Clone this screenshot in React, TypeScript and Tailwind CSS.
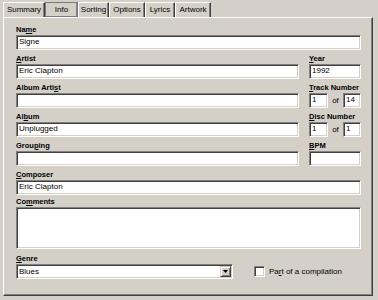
import React from "react";

const sunken =
  "border border-t-[#808080] border-l-[#808080] border-b-white border-r-white shadow-[inset_1px_1px_0_#404040,inset_-1px_-1px_0_#d4d0c8] bg-white";

const Label: React.FC<{ text: string; k: number; className?: string }> = ({
  text,
  k,
  className = "",
}) => (
  <div className={`h-[10px] leading-[10px] text-[7.5px] font-bold text-black ${className}`}>
    {text.slice(0, k)}
    <span className="underline underline-offset-1">{text[k]}</span>
    {text.slice(k + 1)}
  </div>
);

const Field: React.FC<{ value?: string; className?: string }> = ({
  value = "",
  className = "",
}) => (
  <div
    className={`${sunken} h-[15px] px-[2px] leading-[11px] text-[8px] text-black whitespace-nowrap overflow-hidden ${className}`}
  >
    {value}
  </div>
);

const tabs = [
  { name: "Summary", w: "w-[42px]" },
  { name: "Info", w: "w-[33px]" },
  { name: "Sorting", w: "w-[31px]" },
  { name: "Options", w: "w-[36px]" },
  { name: "Lyrics", w: "w-[30px]" },
  { name: "Artwork", w: "w-[36px]" },
];

const NumberPair: React.FC<{ a: string; b: string }> = ({ a, b }) => (
  <div className="flex items-center">
    <Field value={a} className="w-[19px]" />
    <span className="w-[15px] text-center text-[8px] leading-[15px]">of</span>
    <Field value={b} className="w-[18px]" />
  </div>
);

export default function App() {
  return (
    <div
      className="w-[378px] h-[300px] bg-[#d4d0c8] text-black overflow-hidden"
      style={{ fontFamily: '"Liberation Sans", Arial, sans-serif' }}
    >
      <div className="flex pl-[3px] pt-[2px] h-[17px]">
        {tabs.map((t) => (
          <div
            key={t.name}
            className={`${t.w} h-[15px] flex items-center justify-center text-[8px] border-t border-l border-t-white border-l-white border-r border-r-[#404040] shadow-[inset_-1px_0_0_#808080] ${
              t.name === "Info" ? "outline outline-1 outline-[#7a7a7a] -outline-offset-1" : ""
            }`}
          >
            {t.name}
          </div>
        ))}
      </div>

      <div className="ml-[3px] w-[370px] h-[279px] border border-t-white border-l-white border-r-[#404040] border-b-[#404040] shadow-[inset_-1px_-1px_0_#808080] pl-[12px] pr-[11px] pt-[7px]">
        <Label text="Name" k={2} />
        <Field value="Signe" />

        <div className="flex gap-[10px] mt-[4px]">
          <div className="flex-1">
            <Label text="Artist" k={0} />
            <Field value="Eric Clapton" />
          </div>
          <div className="w-[52px]">
            <Label text="Year" k={0} />
            <Field value="1992" />
          </div>
        </div>

        <div className="flex gap-[10px] mt-[4px]">
          <div className="flex-1">
            <Label text="Album Artist" k={10} />
            <Field />
          </div>
          <div className="w-[52px]">
            <Label text="Track Number" k={0} className="whitespace-nowrap" />
            <NumberPair a="1" b="14" />
          </div>
        </div>

        <div className="flex gap-[10px] mt-[4px]">
          <div className="flex-1">
            <Label text="Album" k={2} />
            <Field value="Unplugged" />
          </div>
          <div className="w-[52px]">
            <Label text="Disc Number" k={0} className="whitespace-nowrap" />
            <NumberPair a="1" b="1" />
          </div>
        </div>

        <div className="flex gap-[10px] mt-[4px]">
          <div className="flex-1">
            <Label text="Grouping" k={4} />
            <Field />
          </div>
          <div className="w-[52px]">
            <Label text="BPM" k={0} />
            <Field />
          </div>
        </div>

        <div className="mt-[4px]">
          <Label text="Composer" k={0} />
          <Field value="Eric Clapton" />
        </div>

        <div className="mt-[2px]">
          <Label text="Comments" k={2} />
          <div className={`${sunken} h-[42px]`} />
        </div>

        <div className="flex items-end mt-[5px]">
          <div className="w-[217px]">
            <Label text="Genre" k={0} className="h-[9px] leading-[9px]" />
            <div className={`${sunken} h-[15px] flex items-center pl-[2px] pr-[1px]`}>
              <span className="flex-1 text-[8px] leading-[11px]">Blues</span>
              <div className="w-[11px] h-[11px] bg-[#d4d0c8] border border-t-[#d4d0c8] border-l-[#d4d0c8] border-b-[#404040] border-r-[#404040] shadow-[inset_1px_1px_0_#fff,inset_-1px_-1px_0_#808080] flex items-center justify-center">
                <svg width="5" height="3" viewBox="0 0 5 3">
                  <path d="M0 0h5L2.5 3z" fill="#000" />
                </svg>
              </div>
            </div>
          </div>
          <div className="flex items-center ml-[21px] h-[15px]">
            <div className={`${sunken} w-[11px] h-[11px]`} />
            <span className="ml-[4px] text-[8px] leading-[11px]">
              Pa<span className="underline underline-offset-1">r</span>t of a compilation
            </span>
          </div>
        </div>
      </div>
    </div>
  );
}
